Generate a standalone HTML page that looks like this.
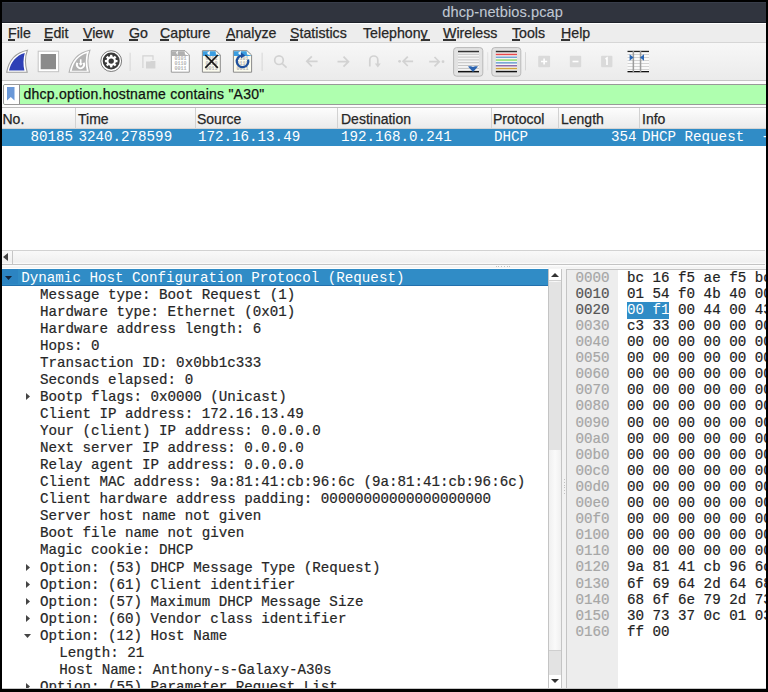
<!DOCTYPE html>
<html><head><meta charset="utf-8">
<style>
*{margin:0;padding:0;box-sizing:border-box}
html,body{width:768px;height:692px;overflow:hidden;background:#000}
body{position:relative;font-family:"Liberation Sans",sans-serif}
.a{position:absolute}
.t{position:absolute;white-space:pre;line-height:1}
.s{font-family:"Liberation Sans",sans-serif;-webkit-text-stroke:0.25px currentColor}
.m{font-family:"Liberation Mono",monospace;-webkit-text-stroke:0.2px currentColor}
svg{position:absolute;overflow:visible}
</style></head>
<body>
<div class="a" style="left:2px;top:2px;width:764px;height:687px;background:#f6f6f6"></div>
<div class="a" style="left:2px;top:2px;width:764px;height:21px;background:#30343e;border-top:1px solid #383d4a;border-bottom:1.6px solid #1c2029"></div>
<div class="t s" style="left:442.3px;top:5.04px;font-size:14.6px;color:#c0c8d2;letter-spacing:0.08px;-webkit-text-stroke:0.1px currentColor">dhcp-netbios.pcap</div>
<div class="a" style="left:2px;top:22.6px;width:764px;height:20.6px;background:#ededed;border-top:1px solid #fff;border-bottom:1.2px solid #d6d6d6"></div>
<div class="t s" style="left:8px;top:25.88px;font-size:14.2px;color:#262626;">File</div>
<div class="t s" style="left:44px;top:25.88px;font-size:14.2px;color:#262626;">Edit</div>
<div class="t s" style="left:83px;top:25.88px;font-size:14.2px;color:#262626;">View</div>
<div class="t s" style="left:129px;top:25.88px;font-size:14.2px;color:#262626;">Go</div>
<div class="t s" style="left:160px;top:25.88px;font-size:14.2px;color:#262626;">Capture</div>
<div class="t s" style="left:226px;top:25.88px;font-size:14.2px;color:#262626;">Analyze</div>
<div class="t s" style="left:290px;top:25.88px;font-size:14.2px;color:#262626;">Statistics</div>
<div class="t s" style="left:363px;top:25.88px;font-size:14.2px;color:#262626;">Telephony</div>
<div class="t s" style="left:443px;top:25.88px;font-size:14.2px;color:#262626;">Wireless</div>
<div class="t s" style="left:512px;top:25.88px;font-size:14.2px;color:#262626;">Tools</div>
<div class="t s" style="left:561px;top:25.88px;font-size:14.2px;color:#262626;">Help</div>
<div class="a" style="left:8px;top:39.4px;width:7px;height:1.5px;background:#333"></div>
<div class="a" style="left:44px;top:39.4px;width:8px;height:1.5px;background:#333"></div>
<div class="a" style="left:83px;top:39.4px;width:9px;height:1.5px;background:#333"></div>
<div class="a" style="left:129px;top:39.4px;width:9px;height:1.5px;background:#333"></div>
<div class="a" style="left:160px;top:39.4px;width:9px;height:1.5px;background:#333"></div>
<div class="a" style="left:226px;top:39.4px;width:9px;height:1.5px;background:#333"></div>
<div class="a" style="left:290px;top:39.4px;width:8px;height:1.5px;background:#333"></div>
<div class="a" style="left:421px;top:39.4px;width:9px;height:1.5px;background:#333"></div>
<div class="a" style="left:443px;top:39.4px;width:13px;height:1.5px;background:#333"></div>
<div class="a" style="left:512px;top:39.4px;width:8px;height:1.5px;background:#333"></div>
<div class="a" style="left:561px;top:39.4px;width:9px;height:1.5px;background:#333"></div>
<div class="a" style="left:2px;top:43.2px;width:764px;height:37.5px;background:linear-gradient(#f7f7f7,#ebebeb);border-bottom:1.2px solid #c6c6c6"></div>
<svg style="left:0;top:0" width="768" height="692" viewBox="0 0 768 692">
<!-- shark fin start -->
<path d="M6.7 72.3 C8.5 62 14 53 27.4 50.3 C25.2 56 25 65 27.2 72.3 Z" fill="#fff" stroke="#9c9c9c" stroke-width="1.1"/>
<path d="M9 70.6 C11 62 16 55.5 24.8 53 C23.2 58.5 23 65 24.4 70.6 Z" fill="#2e40b6"/>
<!-- stop -->
<rect x="38.2" y="51.2" width="20.4" height="20.5" fill="#fff" stroke="#c4c4c4" stroke-width="1"/>
<rect x="40.7" y="54" width="15.3" height="15.2" fill="#8b8b8b"/>
<!-- restart fin -->
<path d="M69.1 72.3 C71 62 76.5 53 89.9 50.3 C87.7 56 87.5 65 89.5 72.3 Z" fill="#fff" stroke="#b4b4b4" stroke-width="1.1"/>
<path d="M71.7 70.7 C73.7 62 78.5 55.5 86.8 53.3 C85.5 58.5 85.3 65 86.8 70.7 Z" fill="#b3b3b3"/>
<path d="M77.4 62.8 A3.6 3.6 0 1 0 83.6 62.8" fill="none" stroke="#fff" stroke-width="1.9"/>
<path d="M80.7 59.3 V65" stroke="#fff" stroke-width="1.6"/>
<path d="M78.6 63.2 L80.7 65.8 L82.8 63.2 Z" fill="#fff"/>
<!-- gear -->
<circle cx="111.2" cy="61.1" r="10.4" fill="#fff" stroke="#7a7a7a" stroke-width="1"/>
<circle cx="111.2" cy="61.1" r="8.5" fill="#3a3a3a"/>
<g transform="translate(111.2 61.1)" fill="#fff">
<circle r="4.8"/>
<rect x="-1.15" y="-6.3" width="2.3" height="12.6"/>
<rect x="-1.15" y="-6.3" width="2.3" height="12.6" transform="rotate(45)"/>
<rect x="-1.15" y="-6.3" width="2.3" height="12.6" transform="rotate(90)"/>
<rect x="-1.15" y="-6.3" width="2.3" height="12.6" transform="rotate(135)"/>
</g>
<circle cx="111.2" cy="61.1" r="2.7" fill="#3a3a3a"/>
<!-- separators -->
<rect x="129.6" y="52.7" width="1" height="18.2" fill="#d6d6d6"/>
<rect x="261.6" y="52.7" width="1" height="18.2" fill="#d6d6d6"/>
<rect x="525" y="52.2" width="1" height="18.2" fill="#d6d6d6"/>
<rect x="487.2" y="52.2" width="1" height="18.2" fill="#e2e2e2"/>
<!-- disabled open-recent -->
<path d="M142.9 68 V55.9 H153 V60" fill="none" stroke="#d4d4d4" stroke-width="1.2"/>
<path d="M146 68.6 V61.5 H150 L151 60.9 H155.4 V68.6 Z" fill="#d4d4d4"/>
<!-- open document -->
<path d="M171.3 50.7 H185 L189.3 55 V72.2 H171.3 Z" fill="#fff" stroke="#9a9a9a" stroke-width="1"/>
<path d="M171.8 51.2 H184.6 L185 54.5 L188.8 55.4 V55.9 H171.8 Z" fill="#b0b0b0"/>
<path d="M176 52.5 L178 50.8 L177.5 55.3 Z" fill="#fff"/>
<g fill="#b4b4b4" font-family="Liberation Mono" font-size="5" font-weight="bold">
<text x="174.5" y="60.3">0101</text><text x="174.5" y="65">0110</text><text x="174.5" y="69.6">0011</text>
</g>
<!-- close document -->
<path d="M202.4 50.7 H216 L220.3 55 V72.2 H202.4 Z" fill="#fbfbee" stroke="#8a8a8a" stroke-width="1"/>
<path d="M202.9 51.2 H215.6 L216 54.5 L219.8 55.4 V56 H202.9 Z" fill="#3b9ee0"/>
<path d="M207 53 L210 50.8 L209.5 55.5 Z" fill="#fff"/>
<g fill="#b4b4b4" font-family="Liberation Mono" font-size="5" font-weight="bold">
<text x="205.5" y="60.3">0101</text><text x="205.5" y="65">0110</text><text x="205.5" y="69.6">0011</text>
</g>
<path d="M205.3 55 L217.8 67.8 M217.8 55 L205.3 67.8" stroke="#1a1a1a" stroke-width="1.7"/>
<!-- reload document -->
<path d="M233.4 50.7 H247 L251.6 55 V72.2 H233.4 Z" fill="#fbfbee" stroke="#8a8a8a" stroke-width="1"/>
<path d="M233.9 51.2 H246.6 L247 54.5 L251.1 55.4 V56 H233.9 Z" fill="#3b9ee0"/>
<path d="M238 53 L241 50.8 L240.5 55.5 Z" fill="#fff"/>
<g fill="#b4b4b4" font-family="Liberation Mono" font-size="5" font-weight="bold">
<text x="236.5" y="60.3">0101</text><text x="236.5" y="65">0110</text><text x="236.5" y="69.6">0011</text>
</g>
<path d="M242 55.5 A5.8 5.8 0 1 0 248.1 59.6" fill="none" stroke="#1d4f9c" stroke-width="2.2"/>
<path d="M241 52.6 L245.3 55.5 L241 58.4 Z" fill="#1d4f9c"/>
<!-- search -->
<g stroke="#d2d2d2" stroke-width="1.7" fill="none">
<circle cx="279" cy="60.2" r="4.3"/>
<path d="M282 63.4 L286.6 67.6"/>
<!-- left arrow -->
<path d="M307 61.3 H317.6 M311.8 56.3 L306.8 61.3 L311.8 66.3"/>
<!-- right arrow -->
<path d="M337.5 61.7 H348.3 M343.5 56.7 L348.5 61.7 L343.5 66.7"/>
<!-- go to -->
<path d="M369.8 66.4 V60 A4 4 0 0 1 377.8 60 V64"/>
<!-- first -->
<path d="M403 61.3 H413.1 M407.8 56.6 L403.1 61.3 L407.8 66"/>
<!-- last -->
<path d="M429.2 61.7 H439.5 M434.5 57 L439.2 61.7 L434.5 66.4"/>
</g>
<path d="M374.8 63.5 H380.8 L377.8 67.5 Z" fill="#d2d2d2"/>
<circle cx="399.6" cy="61.3" r="1.4" fill="#d2d2d2"/>
<circle cx="443" cy="61.7" r="1.4" fill="#d2d2d2"/>
<!-- autoscroll button -->
<rect x="453.6" y="47.6" width="29.2" height="28.6" rx="3" fill="#e2e2e2" stroke="#b8b8b8" stroke-width="1"/>
<rect x="458" y="51" width="21" height="21" fill="#f4f4f4"/>
<g fill="#c4c4c4">
<rect x="458" y="53.8" width="21" height="1"/><rect x="458" y="56.6" width="21" height="1"/><rect x="458" y="59.4" width="21" height="1"/>
<rect x="458" y="62.2" width="21" height="1"/><rect x="458" y="65" width="21" height="1"/><rect x="458" y="67.9" width="21" height="1"/>
</g>
<rect x="458" y="50.8" width="21" height="1.5" fill="#333"/>
<rect x="458" y="70.9" width="21" height="1.5" fill="#111"/>
<path d="M468 66.6 C470 65.8 472 66.4 473 67 C474 66.4 476 65.8 478 66.6 L473 72 Z" fill="#2b64b0"/>
<!-- colorize button -->
<rect x="491.8" y="47.6" width="29" height="28.6" rx="3" fill="#e2e2e2" stroke="#b8b8b8" stroke-width="1"/>
<rect x="495.8" y="51" width="21.2" height="21" fill="#f6f6f6"/>
<rect x="495.8" y="50.8" width="21.2" height="1.5" fill="#333"/>
<rect x="495.8" y="53.7" width="21.2" height="1.5" fill="#e8494c"/>
<rect x="495.8" y="56.5" width="21.2" height="1.5" fill="#77a6d6"/>
<rect x="495.8" y="59.3" width="21.2" height="1.5" fill="#8fdc6a"/>
<rect x="495.8" y="62.1" width="21.2" height="1.5" fill="#6e9fd3"/>
<rect x="495.8" y="65" width="21.2" height="1.5" fill="#8e6aa8"/>
<rect x="495.8" y="67.8" width="21.2" height="1.5" fill="#d2a33c"/>
<rect x="495.8" y="70.8" width="21.2" height="1.5" fill="#111"/>
<!-- zoom in/out/normal -->
<rect x="538.2" y="55.8" width="11.9" height="11.5" rx="1" fill="#dadada"/>
<path d="M544.1 58.5 V64.6 M541 61.5 H547.2" stroke="#fff" stroke-width="1.6"/>
<rect x="569.8" y="55.8" width="11.4" height="11.5" rx="1" fill="#dadada"/>
<path d="M572.5 61.5 H578.5" stroke="#fff" stroke-width="1.6"/>
<rect x="601.1" y="55.8" width="11.3" height="11.5" rx="1" fill="#dadada"/>
<path d="M605.5 59 L607 58 V65" stroke="#fff" stroke-width="1.6" fill="none"/>
<!-- resize columns -->
<rect x="627.5" y="51" width="21.5" height="21" fill="#fafafa"/>
<g fill="#cacaca">
<rect x="627.5" y="54" width="21.5" height="0.8"/><rect x="627.5" y="57" width="21.5" height="0.8"/><rect x="627.5" y="60" width="21.5" height="0.8"/>
<rect x="627.5" y="63" width="21.5" height="0.8"/><rect x="627.5" y="66" width="21.5" height="0.8"/><rect x="627.5" y="69" width="21.5" height="0.8"/>
</g>
<rect x="627.5" y="50.8" width="21.5" height="1.3" fill="#222"/>
<rect x="627.5" y="71" width="21.5" height="1.3" fill="#111"/>
<rect x="632.6" y="51" width="1.5" height="21" fill="#9c9c9c"/>
<rect x="639.8" y="51" width="1.5" height="21" fill="#9c9c9c"/>
<path d="M629.6 54.2 L633.6 57.4 L629.6 60.8 Z" fill="#2a66b4"/>
<path d="M644 54.2 L640 57.4 L644 60.8 Z" fill="#2a66b4"/>
</svg>
<div class="a" style="left:2px;top:80.7px;width:764px;height:27px;background:#fdfdfd"></div>
<div class="a" style="left:3px;top:84px;width:766px;height:21px;border:1px solid #999;border-radius:2px;background:#afffaf;overflow:hidden"><div class="a" style="left:0;top:0;width:16px;height:19px;background:#fff;border-right:1px solid #8f8f8f"></div></div>
<svg style="left:7px;top:87px" width="8" height="14" viewBox="0 0 8 14"><path d="M0 0H7.5V13.5L3.75 10L0 13.5Z" fill="#6a98d8"/></svg>
<div class="t s" style="left:23.5px;top:87.15px;font-size:14px;color:#111;letter-spacing:0.24px">dhcp.option.hostname contains "A30"</div>
<div class="a" style="left:2px;top:107px;width:764px;height:22px;background:linear-gradient(#fdfdfd,#ebebeb);border-top:1px solid #bdbdbd;border-bottom:1px solid #d4d4d4"></div>
<div class="a" style="left:75px;top:108px;width:1px;height:20px;background:#d2d2d2"></div>
<div class="a" style="left:195px;top:108px;width:1px;height:20px;background:#d2d2d2"></div>
<div class="a" style="left:337px;top:108px;width:1px;height:20px;background:#d2d2d2"></div>
<div class="a" style="left:491px;top:108px;width:1px;height:20px;background:#d2d2d2"></div>
<div class="a" style="left:558px;top:108px;width:1px;height:20px;background:#d2d2d2"></div>
<div class="a" style="left:639px;top:108px;width:1px;height:20px;background:#d2d2d2"></div>
<div class="t s" style="left:2.5px;top:112.15px;font-size:14px;color:#262626;">No.</div>
<div class="t s" style="left:78px;top:112.15px;font-size:14px;color:#262626;">Time</div>
<div class="t s" style="left:197px;top:112.15px;font-size:14px;color:#262626;">Source</div>
<div class="t s" style="left:341px;top:112.15px;font-size:14px;color:#262626;">Destination</div>
<div class="t s" style="left:493px;top:112.15px;font-size:14px;color:#262626;">Protocol</div>
<div class="t s" style="left:561px;top:112.15px;font-size:14px;color:#262626;">Length</div>
<div class="t s" style="left:642px;top:112.15px;font-size:14px;color:#262626;">Info</div>
<div class="a" style="left:2px;top:128.5px;width:764px;height:17px;background:#308cc6"></div>
<div class="t m" style="left:30.5px;top:130.12px;font-size:14.2px;color:#fff;-webkit-text-stroke:0">80185</div>
<div class="t m" style="left:78.5px;top:130.12px;font-size:14.2px;color:#fff;-webkit-text-stroke:0">3240.278599</div>
<div class="t m" style="left:198px;top:130.12px;font-size:14.2px;color:#fff;-webkit-text-stroke:0">172.16.13.49</div>
<div class="t m" style="left:341px;top:130.12px;font-size:14.2px;color:#fff;-webkit-text-stroke:0">192.168.0.241</div>
<div class="t m" style="left:494px;top:130.12px;font-size:14.2px;color:#fff;-webkit-text-stroke:0">DHCP</div>
<div class="t m" style="left:611px;top:130.12px;font-size:14.2px;color:#fff;-webkit-text-stroke:0">354</div>
<div class="t m" style="left:642px;top:130.12px;font-size:14.2px;color:#fff;-webkit-text-stroke:0">DHCP Request  - Transaction ID 0x0bb1c333</div>
<div class="a" style="left:2px;top:145.5px;width:764px;height:104.5px;background:#fff"></div>
<div class="a" style="left:2px;top:250.4px;width:763px;height:14.4px;background:linear-gradient(#f9f9f9,#f0f0f0 85%,#fdfdfd);border-top:1px solid #d2d2d2;border-bottom:1px solid #c4c4c4"></div>
<div class="a" style="left:11.5px;top:251px;width:1px;height:13px;background:#c6c6c6"></div>
<svg style="left:3px;top:253px" width="5" height="8" viewBox="0 0 5 8"><path d="M5 0V8L0 4Z" fill="#444"/></svg>
<div class="a" style="left:2px;top:264.8px;width:764px;height:3.5px;background:linear-gradient(#fff,#f0f0f0)"></div>
<div class="a" style="left:495.50px;top:265.5px;width:1px;height:1px;background:#c2c2c2"></div>
<div class="a" style="left:498.25px;top:265.5px;width:1px;height:1px;background:#c2c2c2"></div>
<div class="a" style="left:501.00px;top:265.5px;width:1px;height:1px;background:#c2c2c2"></div>
<div class="a" style="left:503.75px;top:265.5px;width:1px;height:1px;background:#c2c2c2"></div>
<div class="a" style="left:506.50px;top:265.5px;width:1px;height:1px;background:#c2c2c2"></div>
<div class="a" style="left:509.25px;top:265.5px;width:1px;height:1px;background:#c2c2c2"></div>
<div class="a" style="left:2px;top:268px;width:546px;height:421px;background:#fff"></div>
<div class="a" style="left:2px;top:269px;width:546px;height:16.5px;background:#308cc6;border-bottom:1.5px solid #2270ad"></div>
<div class="a" style="left:2px;top:269px;width:16.2px;height:15px;background:#2c84c2"></div>
<div class="a" style="left:2px;top:269px;width:546px;height:419px;overflow:hidden">
<div class="t m" style="left:19.3px;top:1.82px;font-size:14.2px;color:#fff;-webkit-text-stroke:0">Dynamic Host Configuration Protocol (Request)</div>
<svg style="left:3.2000000000000006px;top:6.7px" width="7" height="4" viewBox="0 0 7 4"><path d="M0 0H7L3.5 4Z" fill="#14243a"/></svg>
<div class="t m" style="left:37.9px;top:18.86px;font-size:14.2px;color:#262626;">Message type: Boot Request (1)</div>
<div class="t m" style="left:37.9px;top:35.90px;font-size:14.2px;color:#262626;">Hardware type: Ethernet (0x01)</div>
<div class="t m" style="left:37.9px;top:52.94px;font-size:14.2px;color:#262626;">Hardware address length: 6</div>
<div class="t m" style="left:37.9px;top:69.98px;font-size:14.2px;color:#262626;">Hops: 0</div>
<div class="t m" style="left:37.9px;top:87.02px;font-size:14.2px;color:#262626;">Transaction ID: 0x0bb1c333</div>
<div class="t m" style="left:37.9px;top:104.06px;font-size:14.2px;color:#262626;">Seconds elapsed: 0</div>
<div class="t m" style="left:37.9px;top:121.10px;font-size:14.2px;color:#262626;">Bootp flags: 0x0000 (Unicast)</div>
<svg style="left:23.9px;top:124.27999999999997px" width="4" height="7" viewBox="0 0 4 7"><path d="M0 0V7L4 3.5Z" fill="#444"/></svg>
<div class="t m" style="left:37.9px;top:138.14px;font-size:14.2px;color:#262626;">Client IP address: 172.16.13.49</div>
<div class="t m" style="left:37.9px;top:155.18px;font-size:14.2px;color:#262626;">Your (client) IP address: 0.0.0.0</div>
<div class="t m" style="left:37.9px;top:172.22px;font-size:14.2px;color:#262626;">Next server IP address: 0.0.0.0</div>
<div class="t m" style="left:37.9px;top:189.26px;font-size:14.2px;color:#262626;">Relay agent IP address: 0.0.0.0</div>
<div class="t m" style="left:37.9px;top:206.30px;font-size:14.2px;color:#262626;">Client MAC address: 9a:81:41:cb:96:6c (9a:81:41:cb:96:6c)</div>
<div class="t m" style="left:37.9px;top:223.34px;font-size:14.2px;color:#262626;">Client hardware address padding: 00000000000000000000</div>
<div class="t m" style="left:37.9px;top:240.38px;font-size:14.2px;color:#262626;">Server host name not given</div>
<div class="t m" style="left:37.9px;top:257.42px;font-size:14.2px;color:#262626;">Boot file name not given</div>
<div class="t m" style="left:37.9px;top:274.46px;font-size:14.2px;color:#262626;">Magic cookie: DHCP</div>
<div class="t m" style="left:37.9px;top:291.50px;font-size:14.2px;color:#262626;">Option: (53) DHCP Message Type (Request)</div>
<svg style="left:23.9px;top:294.68000000000006px" width="4" height="7" viewBox="0 0 4 7"><path d="M0 0V7L4 3.5Z" fill="#444"/></svg>
<div class="t m" style="left:37.9px;top:308.54px;font-size:14.2px;color:#262626;">Option: (61) Client identifier</div>
<svg style="left:23.9px;top:311.72px" width="4" height="7" viewBox="0 0 4 7"><path d="M0 0V7L4 3.5Z" fill="#444"/></svg>
<div class="t m" style="left:37.9px;top:325.58px;font-size:14.2px;color:#262626;">Option: (57) Maximum DHCP Message Size</div>
<svg style="left:23.9px;top:328.76px" width="4" height="7" viewBox="0 0 4 7"><path d="M0 0V7L4 3.5Z" fill="#444"/></svg>
<div class="t m" style="left:37.9px;top:342.62px;font-size:14.2px;color:#262626;">Option: (60) Vendor class identifier</div>
<svg style="left:23.9px;top:345.79999999999995px" width="4" height="7" viewBox="0 0 4 7"><path d="M0 0V7L4 3.5Z" fill="#444"/></svg>
<div class="t m" style="left:37.9px;top:359.66px;font-size:14.2px;color:#262626;">Option: (12) Host Name</div>
<svg style="left:21.799999999999997px;top:364.5399999999999px" width="7" height="4" viewBox="0 0 7 4"><path d="M0 0H7L3.5 4Z" fill="#444"/></svg>
<div class="t m" style="left:57.2px;top:376.70px;font-size:14.2px;color:#262626;">Length: 21</div>
<div class="t m" style="left:57.2px;top:393.74px;font-size:14.2px;color:#262626;">Host Name: Anthony-s-Galaxy-A30s</div>
<div class="t m" style="left:37.9px;top:410.78px;font-size:14.2px;color:#262626;">Option: (55) Parameter Request List</div>
<svg style="left:23.9px;top:413.96000000000004px" width="4" height="7" viewBox="0 0 4 7"><path d="M0 0V7L4 3.5Z" fill="#444"/></svg>
</div>
<div class="a" style="left:548px;top:269px;width:14px;height:419px;background:linear-gradient(90deg,#f0f0f0,#fafafa 50%,#f0f0f0);border-left:1px solid #c4c4c4;border-right:1px solid #c4c4c4"></div>
<div class="a" style="left:549px;top:269px;width:12px;height:12px;background:#fff;border-bottom:1px solid #d0d0d0"></div>
<svg style="left:551px;top:273px" width="8" height="4" viewBox="0 0 8 4"><path d="M0 4H8L4 0Z" fill="#333"/></svg>
<div class="a" style="left:549px;top:282px;width:12px;height:168px;background:#e3e3e3"></div>
<div class="a" style="left:549px;top:650px;width:12px;height:25px;background:#e3e3e3;border-top:1px solid #cfcfcf"></div>
<div class="a" style="left:549px;top:675px;width:12px;height:13px;background:#fff"></div>
<svg style="left:551px;top:679px" width="8" height="4" viewBox="0 0 8 4"><path d="M0 0H8L4 4Z" fill="#333"/></svg>
<div class="a" style="left:562px;top:268.5px;width:4px;height:420px;background:#f2f2f2"></div>
<div class="a" style="left:564px;top:479.00px;width:1px;height:1px;background:#c2c2c2"></div>
<div class="a" style="left:564px;top:481.75px;width:1px;height:1px;background:#c2c2c2"></div>
<div class="a" style="left:564px;top:484.50px;width:1px;height:1px;background:#c2c2c2"></div>
<div class="a" style="left:564px;top:487.25px;width:1px;height:1px;background:#c2c2c2"></div>
<div class="a" style="left:564px;top:490.00px;width:1px;height:1px;background:#c2c2c2"></div>
<div class="a" style="left:564px;top:492.75px;width:1px;height:1px;background:#c2c2c2"></div>
<div class="a" style="left:565.5px;top:268.5px;width:201px;height:420px;background:#fff;border-left:1px solid #c4c4c4;border-top:1px solid #c4c4c4"></div>
<div class="a" style="left:567px;top:269.5px;width:51px;height:418px;background:#ededed"></div>
<div class="a" style="left:627px;top:301.5px;width:42px;height:17px;background:#308cc6"></div>
<div class="a" style="left:566px;top:269px;width:200px;height:419px;overflow:hidden">
<div class="t m" style="left:9.399999999999977px;top:1.72px;font-size:14.2px;color:#a6a6a6;">0000</div>
<div class="t m" style="left:61px;top:1.72px;font-size:14.2px;color:#222;">bc 16 f5 ae f5 bc</div>
<div class="t m" style="left:9.399999999999977px;top:17.82px;font-size:14.2px;color:#555;">0010</div>
<div class="t m" style="left:61px;top:17.82px;font-size:14.2px;color:#222;">01 54 f0 4b 40 00</div>
<div class="t m" style="left:9.399999999999977px;top:33.91px;font-size:14.2px;color:#555;">0020</div>
<div class="t m" style="left:61px;top:33.91px;font-size:14.2px;color:#fff;-webkit-text-stroke:0">00 f1</div>
<div class="t m" style="left:61px;top:33.91px;font-size:14.2px;color:#222;">      00 44 00 43</div>
<div class="t m" style="left:9.399999999999977px;top:50.01px;font-size:14.2px;color:#a6a6a6;">0030</div>
<div class="t m" style="left:61px;top:50.01px;font-size:14.2px;color:#222;">c3 33 00 00 00 00</div>
<div class="t m" style="left:9.399999999999977px;top:66.10px;font-size:14.2px;color:#a6a6a6;">0040</div>
<div class="t m" style="left:61px;top:66.10px;font-size:14.2px;color:#222;">00 00 00 00 00 00</div>
<div class="t m" style="left:9.399999999999977px;top:82.20px;font-size:14.2px;color:#a6a6a6;">0050</div>
<div class="t m" style="left:61px;top:82.20px;font-size:14.2px;color:#222;">00 00 00 00 00 00</div>
<div class="t m" style="left:9.399999999999977px;top:98.29px;font-size:14.2px;color:#a6a6a6;">0060</div>
<div class="t m" style="left:61px;top:98.29px;font-size:14.2px;color:#222;">00 00 00 00 00 00</div>
<div class="t m" style="left:9.399999999999977px;top:114.39px;font-size:14.2px;color:#a6a6a6;">0070</div>
<div class="t m" style="left:61px;top:114.39px;font-size:14.2px;color:#222;">00 00 00 00 00 00</div>
<div class="t m" style="left:9.399999999999977px;top:130.48px;font-size:14.2px;color:#a6a6a6;">0080</div>
<div class="t m" style="left:61px;top:130.48px;font-size:14.2px;color:#222;">00 00 00 00 00 00</div>
<div class="t m" style="left:9.399999999999977px;top:146.58px;font-size:14.2px;color:#a6a6a6;">0090</div>
<div class="t m" style="left:61px;top:146.58px;font-size:14.2px;color:#222;">00 00 00 00 00 00</div>
<div class="t m" style="left:9.399999999999977px;top:162.67px;font-size:14.2px;color:#a6a6a6;">00a0</div>
<div class="t m" style="left:61px;top:162.67px;font-size:14.2px;color:#222;">00 00 00 00 00 00</div>
<div class="t m" style="left:9.399999999999977px;top:178.77px;font-size:14.2px;color:#a6a6a6;">00b0</div>
<div class="t m" style="left:61px;top:178.77px;font-size:14.2px;color:#222;">00 00 00 00 00 00</div>
<div class="t m" style="left:9.399999999999977px;top:194.86px;font-size:14.2px;color:#a6a6a6;">00c0</div>
<div class="t m" style="left:61px;top:194.86px;font-size:14.2px;color:#222;">00 00 00 00 00 00</div>
<div class="t m" style="left:9.399999999999977px;top:210.96px;font-size:14.2px;color:#a6a6a6;">00d0</div>
<div class="t m" style="left:61px;top:210.96px;font-size:14.2px;color:#222;">00 00 00 00 00 00</div>
<div class="t m" style="left:9.399999999999977px;top:227.05px;font-size:14.2px;color:#a6a6a6;">00e0</div>
<div class="t m" style="left:61px;top:227.05px;font-size:14.2px;color:#222;">00 00 00 00 00 00</div>
<div class="t m" style="left:9.399999999999977px;top:243.15px;font-size:14.2px;color:#a6a6a6;">00f0</div>
<div class="t m" style="left:61px;top:243.15px;font-size:14.2px;color:#222;">00 00 00 00 00 00</div>
<div class="t m" style="left:9.399999999999977px;top:259.24px;font-size:14.2px;color:#a6a6a6;">0100</div>
<div class="t m" style="left:61px;top:259.24px;font-size:14.2px;color:#222;">00 00 00 00 00 00</div>
<div class="t m" style="left:9.399999999999977px;top:275.34px;font-size:14.2px;color:#a6a6a6;">0110</div>
<div class="t m" style="left:61px;top:275.34px;font-size:14.2px;color:#222;">00 00 00 00 00 00</div>
<div class="t m" style="left:9.399999999999977px;top:291.43px;font-size:14.2px;color:#a6a6a6;">0120</div>
<div class="t m" style="left:61px;top:291.43px;font-size:14.2px;color:#222;">9a 81 41 cb 96 6c</div>
<div class="t m" style="left:9.399999999999977px;top:307.53px;font-size:14.2px;color:#a6a6a6;">0130</div>
<div class="t m" style="left:61px;top:307.53px;font-size:14.2px;color:#222;">6f 69 64 2d 64 68</div>
<div class="t m" style="left:9.399999999999977px;top:323.62px;font-size:14.2px;color:#a6a6a6;">0140</div>
<div class="t m" style="left:61px;top:323.62px;font-size:14.2px;color:#222;">68 6f 6e 79 2d 73</div>
<div class="t m" style="left:9.399999999999977px;top:339.72px;font-size:14.2px;color:#a6a6a6;">0150</div>
<div class="t m" style="left:61px;top:339.72px;font-size:14.2px;color:#222;">30 73 37 0c 01 03</div>
<div class="t m" style="left:9.399999999999977px;top:355.81px;font-size:14.2px;color:#a6a6a6;">0160</div>
<div class="t m" style="left:61px;top:355.81px;font-size:14.2px;color:#222;">ff 00</div>
</div>
<div class="a" style="left:2px;top:688px;width:764px;height:1px;background:#c8c8c8"></div>
<div class="a" style="left:766px;top:0;width:2px;height:692px;background:#000"></div>
<div class="a" style="left:0;top:0;width:768px;height:2px;background:#000"></div>
<div class="a" style="left:0;top:0;width:2px;height:692px;background:#000"></div>
<div class="a" style="left:0;top:689px;width:768px;height:3px;background:#000"></div>
</body></html>
